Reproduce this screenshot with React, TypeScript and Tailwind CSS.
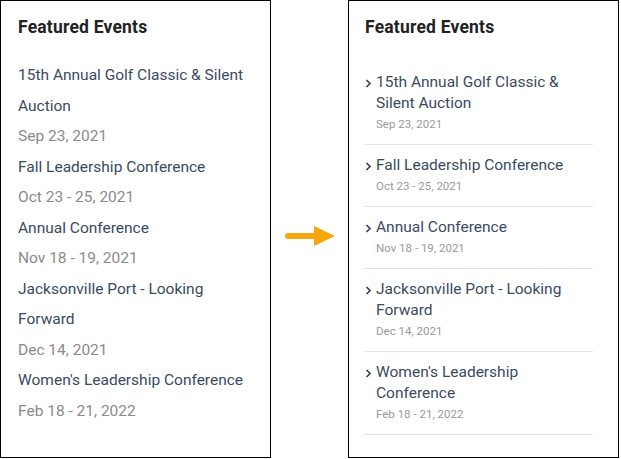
const events = [
  { title: '15th Annual Golf Classic & Silent Auction', date: 'Sep 23, 2021' },
  { title: 'Fall Leadership Conference', date: 'Oct 23 - 25, 2021' },
  { title: 'Annual Conference', date: 'Nov 18 - 19, 2021' },
  { title: 'Jacksonville Port - Looking Forward', date: 'Dec 14, 2021' },
  { title: "Women's Leadership Conference", date: 'Feb 18 - 21, 2022' },
];

const font = { fontFamily: 'Roboto, "Liberation Sans", sans-serif' };

function Before() {
  return (
    <div className="w-[271px] h-[458px] border border-black bg-white pl-[17px] pr-[20px] pt-[14px]">
      <h2 className="text-[17.5px] font-bold text-[#222] leading-[24px] tracking-[0.2px]">Featured Events</h2>
      <ul className="mt-[21px] text-[15.5px] leading-[30.5px]">
        {events.map((e) => (
          <li key={e.date}>
            <div className="text-[#3a4b5e]">{e.title}</div>
            <div className="text-[#8b8b8b]">{e.date}</div>
          </li>
        ))}
      </ul>
    </div>
  );
}

function Arrow() {
  return (
    <div className="w-[77px] flex justify-center pt-[226px]">
      <svg width="50" height="20" viewBox="0 0 50 20">
        <rect x="0" y="7" width="31" height="6" rx="3" fill="#f6a70e" />
        <polygon points="29,0 50,10 29,20" fill="#f6a70e" />
      </svg>
    </div>
  );
}

function After() {
  return (
    <div className="w-[271px] h-[458px] border border-black bg-white pl-[16px] pr-[25px] pt-[14px]">
      <h2 className="text-[17.5px] font-bold text-[#222] leading-[24px] tracking-[0.2px]">Featured Events</h2>
      <ul className="mt-[23px]">
        {events.map((e) => (
          <li key={e.date} className="flex py-[10px] border-b border-[#e3e3e3]">
            <span className="w-[11px] shrink-0 text-[15px] leading-[21px]">
              <svg width="7" height="9" viewBox="0 0 7 9" className="mt-[7px]">
                <path d="M1.5 1 L5 4.5 L1.5 8" fill="none" stroke="#2f3e50" strokeWidth="1.6" />
              </svg>
            </span>
            <div>
              <div className="text-[15.5px] leading-[21px] text-[#3a4b5e]">{e.title}</div>
              <div className="text-[11.5px] leading-[20px] text-[#9a9a9a]">{e.date}</div>
            </div>
          </li>
        ))}
      </ul>
    </div>
  );
}

export default function App() {
  return (
    <div className="w-[621px] h-[459px] bg-white flex items-start" style={font}>
      <Before />
      <Arrow />
      <After />
    </div>
  );
}
